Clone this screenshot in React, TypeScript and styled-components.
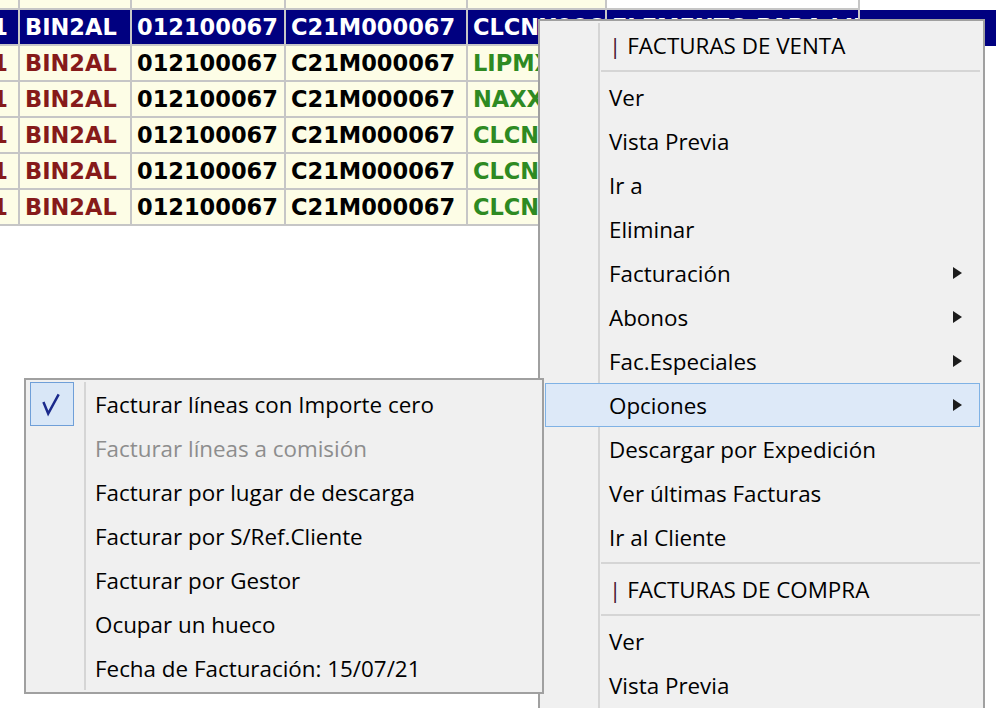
import React from 'react';
import styled, { createGlobalStyle } from 'styled-components';

const GlobalStyle = createGlobalStyle`
  html, body {
    margin: 0;
    padding: 0;
    background: #ffffff;
  }
  #root {
    position: relative;
    width: 996px;
    height: 708px;
    overflow: hidden;
  }
`;

type Tone = 'red' | 'black' | 'green' | 'plain';

interface CellData {
  text: string;
  tone: Tone;
}

const COLS = [20, 112, 154, 182, 139, 253];

const makeRow = (code: string): CellData[] => [
  { text: '01', tone: 'red' },
  { text: 'BIN2AL', tone: 'red' },
  { text: '012100067', tone: 'black' },
  { text: 'C21M000067', tone: 'black' },
  { text: code, tone: 'green' },
  { text: 'ELEMENTO PARA LIMPIEZA', tone: 'plain' },
];

const rows = [
  { cells: makeRow('CLCNX0067'), selected: false },
  { cells: makeRow('CLCNX0067'), selected: true },
  { cells: makeRow('LIPMX0067'), selected: false },
  { cells: makeRow('NAXXX0067'), selected: false },
  { cells: makeRow('CLCNX0068'), selected: false },
  { cells: makeRow('CLCNX0069'), selected: false },
  { cells: makeRow('CLCNX0070'), selected: false },
];

const toneColor: Record<Tone, string> = {
  red: '#861a1a',
  black: '#000000',
  green: '#2e8a22',
  plain: '#000000',
};

const Grid = styled.div`
  margin-top: -26px;
  font-family: 'DejaVu Sans', Verdana, sans-serif;
  font-weight: bold;
  font-size: 22.5px;
`;

const Row = styled.div<{ $selected?: boolean }>`
  display: flex;
  height: 36px;
  background: ${(p) => (p.$selected ? '#000080' : 'transparent')};
`;

const Cell = styled.div<{ $w: number; $tone: Tone; $selected?: boolean; $end?: boolean }>`
  box-sizing: border-box;
  flex: none;
  width: ${(p) => p.$w}px;
  display: flex;
  align-items: center;
  justify-content: ${(p) => (p.$end ? 'flex-end' : 'flex-start')};
  padding: ${(p) => (p.$end ? '0 10px 0 0' : '0 0 0 5px')};
  overflow: hidden;
  white-space: nowrap;
  border-right: 2px solid #c6c6c6;
  border-bottom: 2px solid #c6c6c6;
  background: ${(p) => (p.$selected ? '#000080' : p.$tone === 'plain' ? '#ffffff' : '#fdfde6')};
  color: ${(p) => (p.$selected ? '#ffffff' : toneColor[p.$tone])};
`;

const Menu = styled.div<{ $left: number; $top: number; $width: number; $front?: boolean }>`
  position: absolute;
  left: ${(p) => p.$left}px;
  top: ${(p) => p.$top}px;
  width: ${(p) => p.$width}px;
  box-sizing: border-box;
  border: 2px solid #a0a0a0;
  padding: 2px 3px 2px 5px;
  background: linear-gradient(#d5d5d5, #d5d5d5) 58px 2px / 2px calc(100% - 4px) no-repeat, #f0f0f0;
  font-family: 'Open Sans', 'Noto Sans', sans-serif;
  font-size: 22.4px;
  color: #000000;
  z-index: ${(p) => (p.$front ? 2 : 1)};
`;

const Item = styled.div<{ $active?: boolean; $disabled?: boolean }>`
  box-sizing: border-box;
  display: flex;
  align-items: center;
  height: 44px;
  padding-right: 17px;
  border: 1px solid ${(p) => (p.$active ? '#7fb2e5' : 'transparent')};
  background: ${(p) => (p.$active ? '#dde9f8' : 'transparent')};
  color: ${(p) => (p.$disabled ? '#8d8d8d' : '#000000')};
  white-space: nowrap;
`;

const CheckSlot = styled.span<{ $on?: boolean }>`
  box-sizing: border-box;
  flex: none;
  width: 44px;
  height: 44px;
  margin: -1px 21px -1px -2px;
  display: flex;
  align-items: center;
  justify-content: center;
  border: 1px solid ${(p) => (p.$on ? '#6f9fd8' : 'transparent')};
  background: ${(p) => (p.$on ? '#d9e7f7' : 'transparent')};
`;

const Label = styled.span`
  flex: 1;
`;

const Bar = styled.span`
  color: #4a1230;
`;

const Separator = styled.div`
  height: 8px;
  margin-left: 56px;
  display: flex;
  align-items: center;
  &::after {
    content: '';
    flex: 1;
    height: 2px;
    background: #d5d5d5;
  }
`;

const Arrow = () => (
  <svg width="9" height="12" viewBox="0 0 9 12">
    <path d="M0 0 L9 6 L0 12 Z" fill="#1c1c1c" />
  </svg>
);

const Check = () => (
  <svg width="44" height="44" viewBox="0 0 44 44">
    <path d="M13 20 L18 32 L29 12" fill="none" stroke="#1b2a8c" strokeWidth="2.6" strokeLinejoin="miter" />
  </svg>
);

type Entry =
  | { kind: 'sep' }
  | { kind: 'header'; text: string }
  | { kind: 'item'; text: string; sub?: boolean; active?: boolean; disabled?: boolean; checked?: boolean };

const mainEntries: Entry[] = [
  { kind: 'header', text: 'FACTURAS DE VENTA' },
  { kind: 'sep' },
  { kind: 'item', text: 'Ver' },
  { kind: 'item', text: 'Vista Previa' },
  { kind: 'item', text: 'Ir a' },
  { kind: 'item', text: 'Eliminar' },
  { kind: 'item', text: 'Facturación', sub: true },
  { kind: 'item', text: 'Abonos', sub: true },
  { kind: 'item', text: 'Fac.Especiales', sub: true },
  { kind: 'item', text: 'Opciones', sub: true, active: true },
  { kind: 'item', text: 'Descargar por Expedición' },
  { kind: 'item', text: 'Ver últimas Facturas' },
  { kind: 'item', text: 'Ir al Cliente' },
  { kind: 'sep' },
  { kind: 'header', text: 'FACTURAS DE COMPRA' },
  { kind: 'sep' },
  { kind: 'item', text: 'Ver' },
  { kind: 'item', text: 'Vista Previa' },
  { kind: 'item', text: 'Ir a' },
];

const optionEntries: Entry[] = [
  { kind: 'item', text: 'Facturar líneas con Importe cero', checked: true },
  { kind: 'item', text: 'Facturar líneas a comisión', disabled: true },
  { kind: 'item', text: 'Facturar por lugar de descarga' },
  { kind: 'item', text: 'Facturar por S/Ref.Cliente' },
  { kind: 'item', text: 'Facturar por Gestor' },
  { kind: 'item', text: 'Ocupar un hueco' },
  { kind: 'item', text: 'Fecha de Facturación: 15/07/21' },
];

const MenuEntries: React.FC<{ entries: Entry[] }> = ({ entries }) => (
  <>
    {entries.map((e, i) => {
      if (e.kind === 'sep') return <Separator key={i} />;
      if (e.kind === 'header')
        return (
          <Item key={i}>
            <CheckSlot />
            <Label>
              <Bar>|</Bar> {e.text}
            </Label>
          </Item>
        );
      return (
        <Item key={i} $active={e.active} $disabled={e.disabled}>
          <CheckSlot $on={e.checked}>{e.checked && <Check />}</CheckSlot>
          <Label>{e.text}</Label>
          {e.sub && <Arrow />}
        </Item>
      );
    })}
  </>
);

export default function App() {
  return (
    <>
      <GlobalStyle />
      <Grid>
        {rows.map((r, ri) => (
          <Row key={ri} $selected={r.selected}>
            {r.cells.map((c, ci) => (
              <Cell key={ci} $w={COLS[ci]} $tone={c.tone} $selected={r.selected} $end={ci === 0}>
                {c.text}
              </Cell>
            ))}
          </Row>
        ))}
      </Grid>
      <Menu $left={538} $top={19} $width={447}>
        <MenuEntries entries={mainEntries} />
      </Menu>
      <Menu $left={24} $top={378} $width={520} $front>
        <MenuEntries entries={optionEntries} />
      </Menu>
    </>
  );
}
